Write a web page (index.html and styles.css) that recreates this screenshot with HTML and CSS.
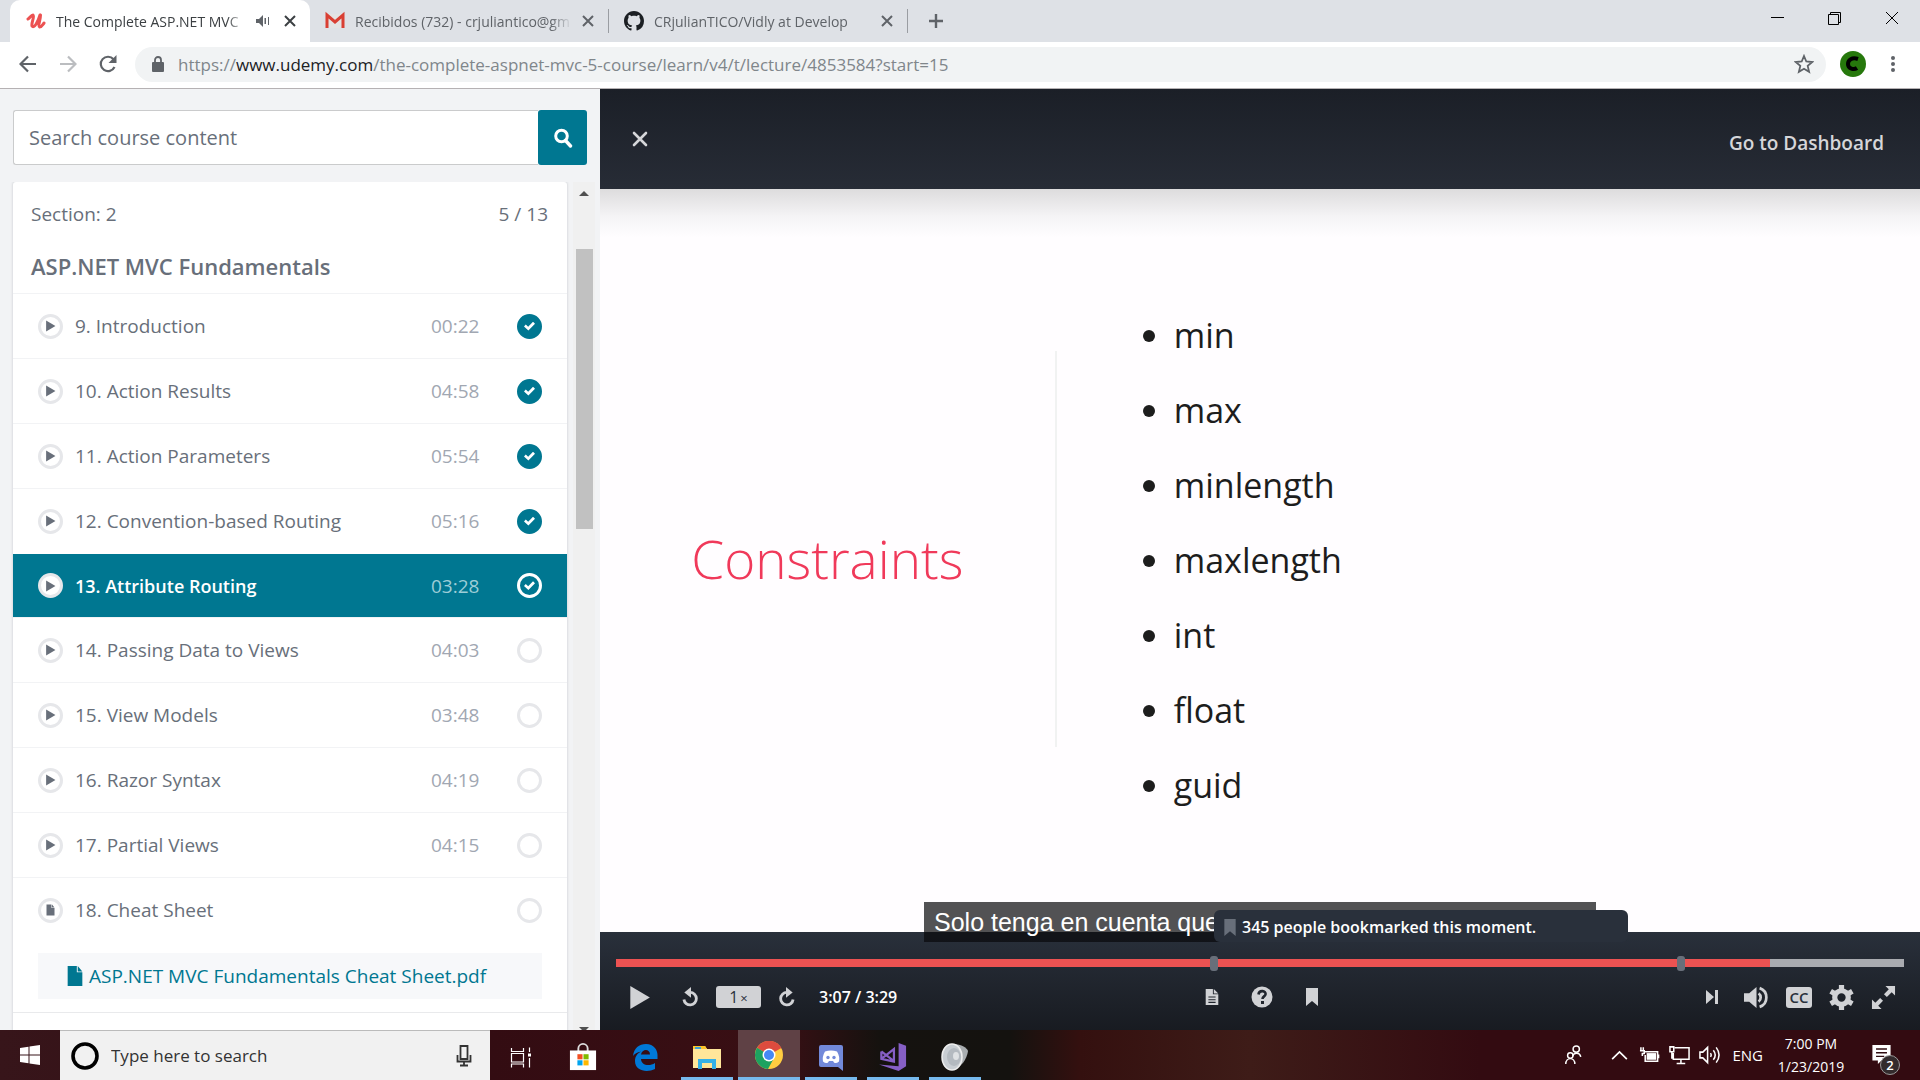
FILE: index.html
```html
<!DOCTYPE html>
<html lang="en">
<head>
<meta charset="utf-8">
<meta name="viewport" content="width=device-width, initial-scale=1">
<title>The Complete ASP.NET MVC 5 Course</title>
<link rel="stylesheet" href="styles.css">
</head>
<body>
<svg class="defs" aria-hidden="true">
  <symbol id="close" viewBox="0 0 12 12"><path d="M1 1l10 10M11 1L1 11" fill="none" stroke="currentColor" stroke-width="2"/></symbol>
  <symbol id="play" viewBox="0 0 20 20"><path d="M2 0l17 10L2 20z" fill="currentColor"/></symbol>
  <symbol id="file" viewBox="0 0 18 24"><path d="M1 1h10v7h6v15H1zM12 1l5 6h-5z" fill="currentColor"/></symbol>
  <symbol id="rotate" viewBox="0 0 24 24"><path d="M11 6.500a7.500 7.500 0 1 1-7.500 8.500" fill="none" stroke="currentColor" stroke-width="3.400"/><path d="M4 6.500L12 0v13z" fill="currentColor"/></symbol>
  <symbol id="mark" viewBox="0 0 14 18"><path d="M1 0h12v18l-6-5-6 5z" fill="currentColor"/></symbol>
</svg>

<header class="browser">
  <div class="tabstrip">
    <div class="tab active">
      <svg class="fav" viewBox="0 0 20 20"><path d="M2 8c2-1 3-4 5-4 2 1-2 8-1 11 2 3 6-4 8-11M14.500 4c0 5-3 11-1 12 2 0 3-2 4.500-4" fill="none" stroke="#ec5252" stroke-width="3" stroke-linecap="round"/></svg>
      <span class="tab-title">The Complete ASP.NET MVC</span>
      <svg class="audio" viewBox="0 0 14 12"><path d="M0 4h3l4-4v12L3 8H0zM8.500 3h1.500v6H8.500zM12 2h1v8h-1z" fill="#5f6368"/></svg>
      <button class="tab-x" aria-label="Close tab"><svg><use href="#close"/></svg></button>
    </div>
    <div class="tab">
      <svg class="fav" viewBox="0 0 20 20"><path d="M2 3h16v14H2z" fill="#e3e3e3"/><path d="M2 17V4l8 7 8-7v13" fill="none" stroke="#d93f33" stroke-width="3"/></svg>
      <span class="tab-title">Recibidos (732) - crjuliantico@gm</span>
      <button class="tab-x" aria-label="Close tab"><svg><use href="#close"/></svg></button>
    </div>
    <div class="tab">
      <svg class="fav" viewBox="0 0 16 16"><path fill="#1b1f23" d="M8 0C3.580 0 0 3.580 0 8c0 3.540 2.290 6.530 5.470 7.590.4.070.55-.17.55-.38 0-.19-.01-.82-.01-1.490-2.010.37-2.530-.49-2.690-.94-.09-.23-.48-.94-.82-1.130-.28-.15-.68-.52-.01-.53.63-.01 1.080.58 1.230.82.72 1.210 1.870.87 2.330.66.07-.52.28-.87.51-1.070-1.780-.2-3.640-.89-3.640-3.950 0-.87.31-1.590.82-2.150-.08-.2-.36-1.020.08-2.120 0 0 .67-.21 2.200.82.64-.18 1.320-.27 2-.27s1.360.09 2 .27c1.530-1.040 2.200-.82 2.200-.82.44 1.100.16 1.920.08 2.120.51.56.82 1.270.82 2.150 0 3.070-1.870 3.750-3.650 3.950.29.25.54.73.54 1.480 0 1.070-.01 1.930-.01 2.200 0 .21.15.46.55.38A8 8 0 0 0 16 8c0-4.420-3.580-8-8-8z"/></svg>
      <span class="tab-title">CRjulianTICO/Vidly at Develop</span>
      <button class="tab-x" aria-label="Close tab"><svg><use href="#close"/></svg></button>
    </div>
    <button class="new-tab" aria-label="New tab"><svg viewBox="0 0 16 16"><path d="M8 1v14M1 8h14" stroke="currentColor" stroke-width="2.400"/></svg></button>
    <div class="window-buttons">
      <button aria-label="Minimize"><svg viewBox="0 0 14 14"><path d="M0 6.500h13" stroke="#000"/></svg></button>
      <button aria-label="Restore"><svg viewBox="0 0 14 14"><path d="M.5 3.500h10v10H.5zM2.500 3V1.500h10v10H11" fill="none" stroke="#000"/></svg></button>
      <button aria-label="Close"><svg viewBox="0 0 14 14"><path d="M1 1l12 12M13 1L1 13" stroke="#000"/></svg></button>
    </div>
  </div>
  <div class="toolbar">
    <button aria-label="Back"><svg viewBox="0 0 18 18"><path d="M17 9H2M9 1.500L1.500 9 9 16.500" fill="none" stroke="#5f6368" stroke-width="2.200"/></svg></button>
    <button aria-label="Forward"><svg viewBox="0 0 18 18"><path d="M1 9h15M9 1.500L16.500 9 9 16.500" fill="none" stroke="#bbbdc0" stroke-width="2.200"/></svg></button>
    <button aria-label="Reload"><svg viewBox="0 0 18 18"><path d="M15.500 12A7.200 7.200 0 1 1 14.500 4.300" fill="none" stroke="#5f6368" stroke-width="2.200"/><path d="M17.500 0v8h-8z" fill="#5f6368"/></svg></button>
    <div class="omnibox">
      <svg class="lock" viewBox="0 0 12 16"><path d="M1 6h10a1 1 0 0 1 1 1v8a1 1 0 0 1-1 1H1a1 1 0 0 1-1-1V7a1 1 0 0 1 1-1z" fill="#5f6368"/><path d="M3 7V4a3 3 0 0 1 6 0v3" fill="none" stroke="#5f6368" stroke-width="1.800"/></svg>
      <div class="url" role="textbox" aria-label="Address">https://<b>www.udemy.com</b>/the-complete-aspnet-mvc-5-course/learn/v4/t/lecture/4853584?start=15</div>
      <button class="star" aria-label="Bookmark this page"><svg viewBox="0 0 20 20"><path d="M10 2l2.300 5.500 6 .5-4.600 3.900 1.400 5.900L10 14.700l-5.100 3.100 1.400-5.900L1.700 8l6-.5z" fill="none" stroke="#5f6368" stroke-width="1.800"/></svg></button>
    </div>
    <button class="avatar" aria-label="Profile"><svg viewBox="0 0 26 26"><circle cx="13" cy="13" r="13" fill="#26780c"/><path d="M18 8c-6-2-10 1-10 5 0 5 6 6 9 4" fill="none" stroke="#000" stroke-width="4"/></svg></button>
    <button class="kebab" aria-label="Menu"><svg viewBox="0 0 6 18"><circle cx="3" cy="3" r="2"/><circle cx="3" cy="9" r="2"/><circle cx="3" cy="15" r="2"/></svg></button>
  </div>
</header>

<main class="page">
  <aside class="sidebar">
    <form class="search">
      <input type="search" aria-label="Search course content" placeholder="Search course content">
      <button type="button" aria-label="Search"><svg viewBox="0 0 20 20"><circle cx="8.500" cy="8" r="5.800" fill="none" stroke="#fff" stroke-width="3"/><path d="M12.500 12.500l5 5.500" stroke="#fff" stroke-width="3.400" stroke-linecap="round"/></svg></button>
    </form>
    <div class="curriculum">
      <section class="card">
        <div class="card-head">
          <p class="count"><span>Section: 2</span><span>5 / 13</span></p>
          <h2>ASP.NET MVC Fundamentals</h2>
        </div>
        <ol class="lectures">
          <li class="lecture"><span class="kind"><svg><use href="#play"/></svg></span><a href="#l9">9. Introduction</a><time>00:22</time><input type="checkbox" aria-label="9. Introduction completed" checked></li>
          <li class="lecture"><span class="kind"><svg><use href="#play"/></svg></span><a href="#l10">10. Action Results</a><time>04:58</time><input type="checkbox" aria-label="10. Action Results completed" checked></li>
          <li class="lecture"><span class="kind"><svg><use href="#play"/></svg></span><a href="#l11">11. Action Parameters</a><time>05:54</time><input type="checkbox" aria-label="11. Action Parameters completed" checked></li>
          <li class="lecture"><span class="kind"><svg><use href="#play"/></svg></span><a href="#l12">12. Convention-based Routing</a><time>05:16</time><input type="checkbox" aria-label="12. Convention-based Routing completed" checked></li>
          <li class="lecture current"><span class="kind"><svg><use href="#play"/></svg></span><a href="#l13">13. Attribute Routing</a><time>03:28</time><input type="checkbox" aria-label="13. Attribute Routing completed" checked></li>
          <li class="lecture"><span class="kind"><svg><use href="#play"/></svg></span><a href="#l14">14. Passing Data to Views</a><time>04:03</time><input type="checkbox" aria-label="14. Passing Data to Views completed"></li>
          <li class="lecture"><span class="kind"><svg><use href="#play"/></svg></span><a href="#l15">15. View Models</a><time>03:48</time><input type="checkbox" aria-label="15. View Models completed"></li>
          <li class="lecture"><span class="kind"><svg><use href="#play"/></svg></span><a href="#l16">16. Razor Syntax</a><time>04:19</time><input type="checkbox" aria-label="16. Razor Syntax completed"></li>
          <li class="lecture"><span class="kind"><svg><use href="#play"/></svg></span><a href="#l17">17. Partial Views</a><time>04:15</time><input type="checkbox" aria-label="17. Partial Views completed"></li>
          <li class="lecture"><span class="kind"><svg><use href="#file"/></svg></span><a href="#l18">18. Cheat Sheet</a><input type="checkbox" aria-label="18. Cheat Sheet completed"></li>
        </ol>
        <div class="resources"><a href="#pdf"><svg><use href="#file"/></svg>ASP.NET MVC Fundamentals Cheat Sheet.pdf</a></div>
      </section>
      <div class="scrollbar" aria-hidden="true"><i class="up"></i><div class="track"><div class="thumb"></div></div><i class="down"></i></div>
    </div>
  </aside>

  <section class="player">
    <header class="player-head">
      <button aria-label="Close lecture"><svg viewBox="0 0 16 16"><path d="M2 2l12 12M14 2L2 14" stroke="#d5d6d9" stroke-width="2.600" stroke-linecap="round"/></svg></button>
      <a href="#dashboard">Go to Dashboard</a>
    </header>
    <div class="slide">
      <div class="slide-title"><h1>Constraints</h1></div>
      <ul class="slide-list"><li>min</li><li>max</li><li>minlength</li><li>maxlength</li><li>int</li><li>float</li><li>guid</li></ul>
    </div>
    <div class="controls">
      <p class="caption">Solo tenga en cuenta que</p>
      <p class="tooltip"><svg><use href="#mark"/></svg>345 people bookmarked this moment.</p>
      <div class="timeline"><input type="range" aria-label="Seek" min="0" max="209" value="187"><i class="marker first"></i><i class="marker second"></i></div>
      <div class="buttons">
        <div class="group left">
          <button class="playbtn" aria-label="Play"><svg><use href="#play"/></svg></button>
          <button class="turn" aria-label="Back 15 seconds"><svg><use href="#rotate"/></svg></button>
          <button class="speed" aria-label="Playback speed">1<small>×</small></button>
          <button class="turn flip" aria-label="Forward 15 seconds"><svg><use href="#rotate"/></svg></button>
          <span class="clock">3:07 / 3:29</span>
        </div>
        <div class="group middle">
          <button aria-label="Transcript"><svg viewBox="0 0 16 20"><path d="M1 1h8v6h6v12H1zM10 1l5 5h-5z" fill="currentColor"/><path d="M4 10h8M4 13h8M4 16h8" stroke="#20252d" stroke-width="1.200"/></svg></button>
          <button class="help" aria-label="Help"><svg viewBox="0 0 22 22"><circle cx="11" cy="11" r="10.500" fill="currentColor"/><path d="M7.500 8.500c.5-5 8-4 7 0-.5 2-3 2-3 4.500" fill="none" stroke="#20252d" stroke-width="2.600"/><path d="M10 15h3v3h-3z" fill="#20252d"/></svg></button>
          <button aria-label="Bookmark"><svg viewBox="0 0 14 18"><use href="#mark"/></svg></button>
        </div>
        <div class="group right">
          <button class="next" aria-label="Next lecture"><svg viewBox="0 0 14 16"><path d="M1 1l8 7-8 7zM10 1h3v14h-3z" fill="currentColor"/></svg></button>
          <button aria-label="Volume"><svg viewBox="0 0 24 22"><path d="M0 7h5l7-6v20l-7-6H0z" fill="currentColor"/><path d="M14 7a5 5 0 0 1 0 8M15 2a9.500 9.500 0 0 1 0 18" fill="none" stroke="currentColor" stroke-width="2.600"/></svg></button>
          <button class="cc" aria-label="Captions">CC</button>
          <button aria-label="Settings"><svg viewBox="0 0 24 24"><circle cx="12" cy="12" r="6.500" fill="none" stroke="currentColor" stroke-width="5"/><path d="M12 0v5M12 19v5M1.600 6l4.500 2.600M17.900 15.400l4.500 2.600M1.600 18l4.500-2.600M17.900 8.600L22.400 6" stroke="currentColor" stroke-width="5"/></svg></button>
          <button aria-label="Full screen"><svg viewBox="0 0 26 26"><path d="M15 1h10v10l-3.500-3.500-5 5-3-3 5-5zM11 25H1V15l3.500 3.500 5-5 3 3-5 5z" fill="currentColor"/></svg></button>
        </div>
      </div>
    </div>
  </section>
</main>

<footer class="taskbar">
  <button class="start" aria-label="Start"><svg viewBox="0 0 20 20"><path d="M0 3l8.500-1.200v7.700H0zM9.500 1.600L20 0v9.500H9.500zM0 10.500h8.500v7.700L0 17zM9.500 10.500H20V20L9.500 18.400z" fill="#fff"/></svg></button>
  <label class="cortana">
    <svg class="ring" viewBox="0 0 28 28"><circle cx="14" cy="14" r="12" fill="none" stroke="#000" stroke-width="3.600"/></svg>
    <input type="text" placeholder="Type here to search" aria-label="Type here to search">
    <svg class="mic" viewBox="0 0 16 22"><path d="M4.500 1h7v13h-7zM1.500 10v6.500h13V10M8 17v4M4 20.500h8" fill="none" stroke="#333" stroke-width="1.800"/></svg>
  </label>
  <nav class="apps" aria-label="Applications">
    <button aria-label="Task view"><svg viewBox="0 0 28 28"><path d="M4.500 5v3.500h12V5M4.500 10.500h12v8.500h-12zM4.500 24.500V21h12v3.500M22.500 4.500V9M22.500 15v9.500" fill="none" stroke="#fff" stroke-width="1.200"/><path d="M21 10.500h3v3h-3z" fill="#fff"/></svg></button>
    <button aria-label="Store"><svg viewBox="0 0 30 30"><path d="M10 9V6a5 5 0 0 1 10 0v3" fill="none" stroke="#ddd" stroke-width="2"/><path d="M1 8h28v21H1z" fill="#fff"/><path d="M9 12h5.500v5.500H9z" fill="#f25022"/><path d="M15.500 12H21v5.500h-5.500z" fill="#7fba00"/><path d="M9 18.500h5.500V24H9z" fill="#00a4ef"/><path d="M15.500 18.500H21V24h-5.500z" fill="#ffb900"/></svg></button>
    <button aria-label="Edge"><svg viewBox="0 0 28 28"><path fill="#0078d7" d="M2 13C3 5 8 1 15 1c8 0 11.500 6 11.500 11v4H10c0 6 8 8 14 4v6c-8 4-20 2-20-8 0-5 3-8 6-9.500-4 .5-6.500 2.500-8 4.500zM10 11.500h9c0-6-8-6-9 0z"/></svg></button>
    <button class="open" aria-label="File Explorer"><svg viewBox="0 0 28 28"><path d="M0 3h12l2 3h14v19H0z" fill="#ffe69a"/><path d="M0 3h12l2 3H0z" fill="#fcc62c"/><path d="M2 4h6v2H2z" fill="#3e9fd6"/><path d="M5 26V16h18v10h-4v-6H9v6z" fill="#35b1e8"/></svg></button>
    <button class="open focused" aria-label="Chrome"><svg viewBox="0 0 28 28"><circle cx="14" cy="14" r="14" fill="#ffcd41"/><path d="M14 14L2 7a14 14 0 0 1 24.400 0z" fill="#dd4b3e"/><path d="M14 14L2 6.800A14 14 0 0 0 13 28l6-11z" fill="#1da260"/><circle cx="14" cy="14" r="6.500" fill="#fff"/><circle cx="14" cy="14" r="5" fill="#4688f4"/></svg></button>
    <button class="open" aria-label="Discord"><svg viewBox="0 0 28 28"><path d="M4 2h20a2 2 0 0 1 2 2v24l-5-4H4a2 2 0 0 1-2-2V4a2 2 0 0 1 2-2z" fill="#7289da"/><path d="M8 8.500q6-2 12 0 3 5 2 10-3 2.500-5 1l-1-1.500h-4l-1 1.500q-2 1.500-5-1-1-5 2-10z" fill="#fff"/><circle cx="11" cy="14.500" r="1.700" fill="#7289da"/><circle cx="17" cy="14.500" r="1.700" fill="#7289da"/></svg></button>
    <button class="open" aria-label="Visual Studio"><svg viewBox="0 0 30 30"><path d="M21 0l8 3v22l-8 5L0 23l21 2z" fill="#865fc5"/><path d="M2.500 9v8l13.500 3V6.500L2.500 17M2.500 9L16 19.500" fill="none" stroke="#865fc5" stroke-width="2.400"/></svg></button>
    <button class="open" aria-label="Sound"><svg viewBox="0 0 28 28"><path d="M12 1c9 0 14 4 15 7-1 8-7 17-15 18z" fill="#a9adb0"/><ellipse cx="11" cy="14" rx="10" ry="13" fill="#c9ced3" stroke="#eee" stroke-width="1.500"/><ellipse cx="13" cy="14" rx="7" ry="9" fill="#b4bac0"/><ellipse cx="15" cy="13" rx="3" ry="4" fill="#dfe2e4"/></svg></button>
  </nav>
  <div class="tray">
    <button class="people" aria-label="People"><svg viewBox="0 0 20 22"><circle cx="13" cy="4.500" r="3.500"/><path d="M9 12c2-4 8-4 9 1"/><circle cx="6.500" cy="11.500" r="3"/><path d="M1.500 21c0-8 10-8 10 0"/></svg></button>
    <button aria-label="Show hidden icons"><svg viewBox="0 0 20 10"><path d="M3 9l7-7 7 7"/></svg></button>
    <button aria-label="Battery"><svg viewBox="0 0 22 18"><path d="M6 5.500h13.500v10h-13V9M20.500 8.500v4M2 1v3M4.500 1v3M1 4.500h4.500v3h-2V10"/><path d="M8 7h10v7H8z" fill="#fff" stroke="none"/></svg></button>
    <button aria-label="Network"><svg viewBox="0 0 22 20"><path d="M6 2.500h15v12H4.500V8M12.500 15v4M8 19h9M1 1.500h4v5H1zM3 6v8"/></svg></button>
    <button aria-label="Volume"><svg viewBox="0 0 22 20"><path d="M1 7h3l5-5v16l-5-5H1zM12 8q1.500 2 0 4M15 5q4 5 0 10M18 2q6 8 0 16"/></svg></button>
    <button class="lang">ENG</button>
    <time class="date">7:00 PM<br>1/23/2019</time>
    <button class="notes" aria-label="2 notifications"><svg viewBox="0 0 20 22"><path d="M0 0h20v17H10l-4 4v-4H0z" fill="#fff" stroke="none"/><path d="M4 4.500h12M4 8.500h12M4 12.500h9" stroke="#2f0c11"/></svg><span class="badge">2</span></button>
  </div>
</footer>
</body>
</html>
```
FILE: styles.css
```css
* { box-sizing: border-box; }
body {
  margin: 0;
  height: 100vh;
  display: flex;
  flex-direction: column;
  overflow: hidden;
  font-family: "Open Sans", "Noto Sans", sans-serif;
  color: #686f7a;
}
button { border: 0; padding: 0; background: none; font: inherit; color: inherit; display: grid; place-items: center; }
input { font: inherit; margin: 0; min-width: 0; }
a { color: inherit; text-decoration: none; }
p, h1, h2, ul, ol { margin: 0; padding: 0; list-style: none; }
svg { display: block; flex: none; }
.defs { position: absolute; width: 0; height: 0; }

/* Browser window */
.tabstrip { display: flex; height: 42px; padding-left: 10px; background: #dee1e6; }
.tab { width: 299px; display: flex; align-items: center; gap: 10px; padding: 0 14px 0 15px; margin: 9px 0; border-right: 1px solid #9a9da2; font-size: 14px; color: #5f6368; }
.tab.active { width: 300px; margin: 0; border: 0; padding: 0 14px 0 16px; background: #fff; border-radius: 10px 10px 0 0; color: #3c4043; }
.tab-title { flex: 1; overflow: hidden; white-space: nowrap; mask-image: linear-gradient(90deg, #000 90%, transparent); }
.fav { width: 20px; height: 20px; }
.audio { width: 14px; height: 12px; margin-right: 4px; }
.tab-x svg { width: 12px; height: 12px; }
.new-tab { width: 56px; color: #5f6368; }
.new-tab svg { width: 16px; height: 16px; }
.window-buttons { margin-left: auto; display: flex; }
.window-buttons button { width: 57px; padding-bottom: 6px; }
.window-buttons svg { width: 14px; height: 14px; }
.toolbar { display: flex; align-items: center; height: 47px; padding: 0 7px 2px 8px; background: #fff; border-bottom: 1px solid #b5b1b3; }
.toolbar > button { width: 40px; height: 40px; }
.toolbar > button svg { width: 18px; height: 18px; }
.omnibox { flex: 1; display: flex; align-items: center; gap: 14px; height: 35px; margin: 0 14px 0 7px; padding: 0 12px 0 17px; border-radius: 18px; background: #f1f3f4; }
.lock { width: 12px; height: 16px; }
.url { flex: 1; font-size: 17px; color: #80868b; white-space: nowrap; overflow: hidden; }
.url b { font-weight: 400; color: #202124; }
.star svg { width: 20px; height: 20px; }
.toolbar .avatar { width: 26px; }
.toolbar .avatar svg { width: 26px; height: 26px; }
.toolbar .kebab { margin-left: 7px; color: #5f6368; fill: currentColor; }

.page { flex: 1; min-height: 0; display: flex; }

/* Course content */
.sidebar { width: 31.25%; display: flex; flex-direction: column; gap: 17px; padding: 21px 5px 0 13px; background: #f2f3f5; }
.search { display: flex; height: 55px; margin-right: 8px; }
.search input { flex: 1; padding: 0 15px; border: 1px solid #cacbcc; border-right: 0; border-radius: 3px 0 0 3px; background: #fff; font-size: 20px; outline: 0; }
.search input::placeholder { color: #686f7a; }
.search button { width: 49px; border-radius: 3px; background: #007791; }
.search svg { width: 20px; height: 20px; }
.curriculum { flex: 1; min-height: 0; display: flex; justify-content: space-between; }
.card { flex: 1; background: #fff; border-radius: 3px 3px 0 0; box-shadow: 0 0 2px 1px #dcdee1; overflow: hidden; clip-path: inset(0 -3px); }
.card-head { padding: 18px 19px 0 18px; height: 111px; }
.count { display: flex; justify-content: space-between; font-size: 19px; line-height: 28px; }
.card h2 { margin-top: 22px; font-size: 22px; line-height: 32px; font-weight: 600; }
.lecture { display: flex; align-items: center; height: 65px; padding: 0 25px; border-top: 1px solid #f2f3f5; font-size: 19px; }
.lecture a { flex: 1; margin-left: 12px; }
.lecture time { width: 48px; margin-right: 38px; color: #a1a7b2; }
.kind { width: 25px; height: 25px; display: grid; place-items: center; border: 3px solid #e6e7ea; border-radius: 50%; background: #fff; color: #686f7a; }
.kind svg { width: 11px; height: 12px; }
.lecture input { appearance: none; width: 25px; height: 25px; display: grid; place-items: center; border: 3px solid #e6e7ea; border-radius: 50%; }
.lecture input:checked { background: #007791; border-color: #007791; }
.lecture input:checked::before { content: ""; width: 11px; height: 9px; background: #fff; clip-path: polygon(0 55%, 16% 32%, 38% 58%, 82% 4%, 100% 26%, 40% 100%); }
.lecture.current { height: 64px; border-top-color: #fff; background: #007791; background-clip: padding-box; color: #fff; }
.lecture.current a { font-weight: 600; font-size: 18px; }
.lecture.current time { color: #9dcdd7; }
.lecture.current input { border-color: #fff; }
.resources { padding: 11px 25px 13px; border-bottom: 1px solid #e9eaec; }
.resources a { display: flex; align-items: center; gap: 5px; height: 46px; padding-left: 28px; background: #f7f8fa; color: #007791; font-size: 19px; white-space: nowrap; }
.resources svg { width: 18px; height: 22px; }
.scrollbar { width: 22px; margin-left: 6px; display: flex; flex-direction: column; align-items: center; background: #f0f0f0; }
.scrollbar i { width: 0; border: 5px solid transparent; }
.scrollbar .up { margin-top: 4px; border-bottom-color: #505050; }
.scrollbar .down { border-top-color: #505050; border-bottom: 0; margin-bottom: -2px; }
.track { flex: 1; width: 17px; padding-top: 53px; }
.thumb { height: 36%; background: #c1c1c1; }

/* Player */
.player { flex: 1; min-width: 0; display: flex; flex-direction: column; background: #fffdff; }
.player-head { display: flex; align-items: center; justify-content: space-between; height: 100px; padding: 0 36px 0 32px; background: linear-gradient(#1b1f27, #272c36); color: #d5d6d9; font-size: 19px; font-weight: 600; }
.player-head svg { width: 16px; height: 16px; }
.player-head a { padding-top: 8px; }
.slide { flex: 1; display: flex; align-items: center; background: linear-gradient(#dddcdd, #f5f4f6 28px, #fffdff 48px); }
.slide-title { width: 34.6%; height: 396px; margin-bottom: 24px; display: grid; place-items: center; border-right: 2px solid #f1f2f2; }
.slide-title h1 { padding-top: 20px; font-size: 53px; line-height: 72px; font-weight: 300; color: #f0395a; }
.slide-list { margin-left: 86px; font-size: 34px; color: #1d1d1d; }
.slide-list li { display: flex; align-items: center; gap: 19px; line-height: 75px; }
.slide-list li::before { content: ""; width: 12px; height: 12px; border-radius: 50%; background: #1d1d1d; }
.controls { position: relative; height: 98px; padding: 0 16px; background: linear-gradient(#29303b, #181b21); color: #d1d2d5; }
.caption { position: absolute; left: 324px; right: 324px; top: -30px; height: 40px; padding: 0 10px; background: rgba(8, 8, 12, .7); color: #fff; font: 25px/40px "Liberation Sans", Arial, sans-serif; }
.tooltip { position: absolute; left: 614px; right: 292px; top: -22px; height: 32px; display: flex; align-items: center; gap: 5px; padding: 2px 9px 0; border-radius: 6px; background: #29303b; color: #fff; font-size: 16px; font-weight: 600; }
.tooltip svg { width: 14px; height: 17px; color: #686f7a; }
.timeline { position: relative; padding-top: 27px; }
.timeline input { appearance: none; display: block; width: 100%; height: 8px; background: linear-gradient(90deg, #ec5252 89.6%, #a9abb0 89.6%); }
.timeline input::-webkit-slider-thumb { appearance: none; width: 1px; height: 1px; }
.marker { position: absolute; top: 24px; width: 8px; height: 15px; border-radius: 3px; background: #686f7a; }
.first { left: 46.1%; }
.second { left: 82.4%; }
.buttons { display: flex; justify-content: space-between; height: 60px; padding: 0 8px 0 12px; }
.group { display: flex; align-items: center; }
.left { width: 576px; }
.playbtn svg { width: 23px; height: 23px; }
.turn { margin-left: 30px; }
.turn svg { width: 20px; height: 22px; }
.speed { width: 45px; height: 22px; margin-left: 15px; border-radius: 3px; background: #d1d2d5; color: #29303b; font-size: 16px; display: block; line-height: 22px; }
.speed small { font-size: 13px; margin-left: 2px; }
.turn.flip { margin-left: 15px; }
.flip svg { transform: scaleX(-1); }
.clock { margin-left: 23px; font-size: 16px; font-weight: 600; color: #fff; }
.middle { flex: 1; gap: 31px; }
.middle svg { width: 16px; height: 18px; }
.help svg { width: 22px; height: 22px; }
.right { gap: 17px; }
.right svg { width: 25px; height: 25px; }
.right .next { margin-right: 8px; }
.right .next svg { width: 14px; height: 16px; }
.cc { width: 26px; height: 21px; border-radius: 3px; background: #d1d2d5; color: #29303b; font-size: 15px; line-height: 21px; font-weight: 600; }

/* Taskbar */
.taskbar { display: flex; height: 50px; background: linear-gradient(90deg, #37151a 0, #330c12 490px, #390f14 780px, #15120f 880px, #14120f 1010px, #34100f 1080px, #3e1c18 1250px, #330b11 1480px); color: #fff; }
.start { width: 60px; }
.start svg { width: 20px; height: 20px; }
.cortana { width: 430px; display: flex; align-items: center; gap: 12px; padding: 0 18px 0 11px; border-top: 1px solid #bbb; background: #f1f1f1; }
.cortana input { flex: 1; border: 0; background: none; font-size: 17px; padding: 0; outline: 0; }
.cortana input::placeholder { color: #333; }
.ring { width: 28px; height: 28px; }
.mic { width: 16px; height: 22px; }
.apps { display: flex; }
.apps button { width: 62px; border: solid transparent; border-width: 3px 5px 0; background-clip: padding-box; }
.apps svg { width: 28px; height: 28px; }
.apps .open { background: linear-gradient(#76b9ed, #76b9ed) bottom / 100% 3px no-repeat padding-box; }
.apps .focused { border: 0; background: linear-gradient(#76b9ed, #76b9ed) bottom / 100% 3px no-repeat, #5f4145; }
.tray { margin-left: auto; display: flex; align-items: center; gap: 9px; padding-right: 28px; font-size: 15px; }
.tray svg { width: 21px; height: 20px; fill: none; stroke: #fff; stroke-width: 1.600; }
.people { margin-right: 16px; }
.lang { margin-left: 3px; }
.date { width: 78px; text-align: center; font-size: 14px; line-height: 23px; }
.notes { position: relative; margin-left: 12px; }
.badge { position: absolute; left: 9px; top: 10px; width: 20px; height: 20px; border: 1px solid #999; border-radius: 50%; background: #332b2d; font-size: 13px; line-height: 18px; font-weight: 600; text-align: center; }
```
